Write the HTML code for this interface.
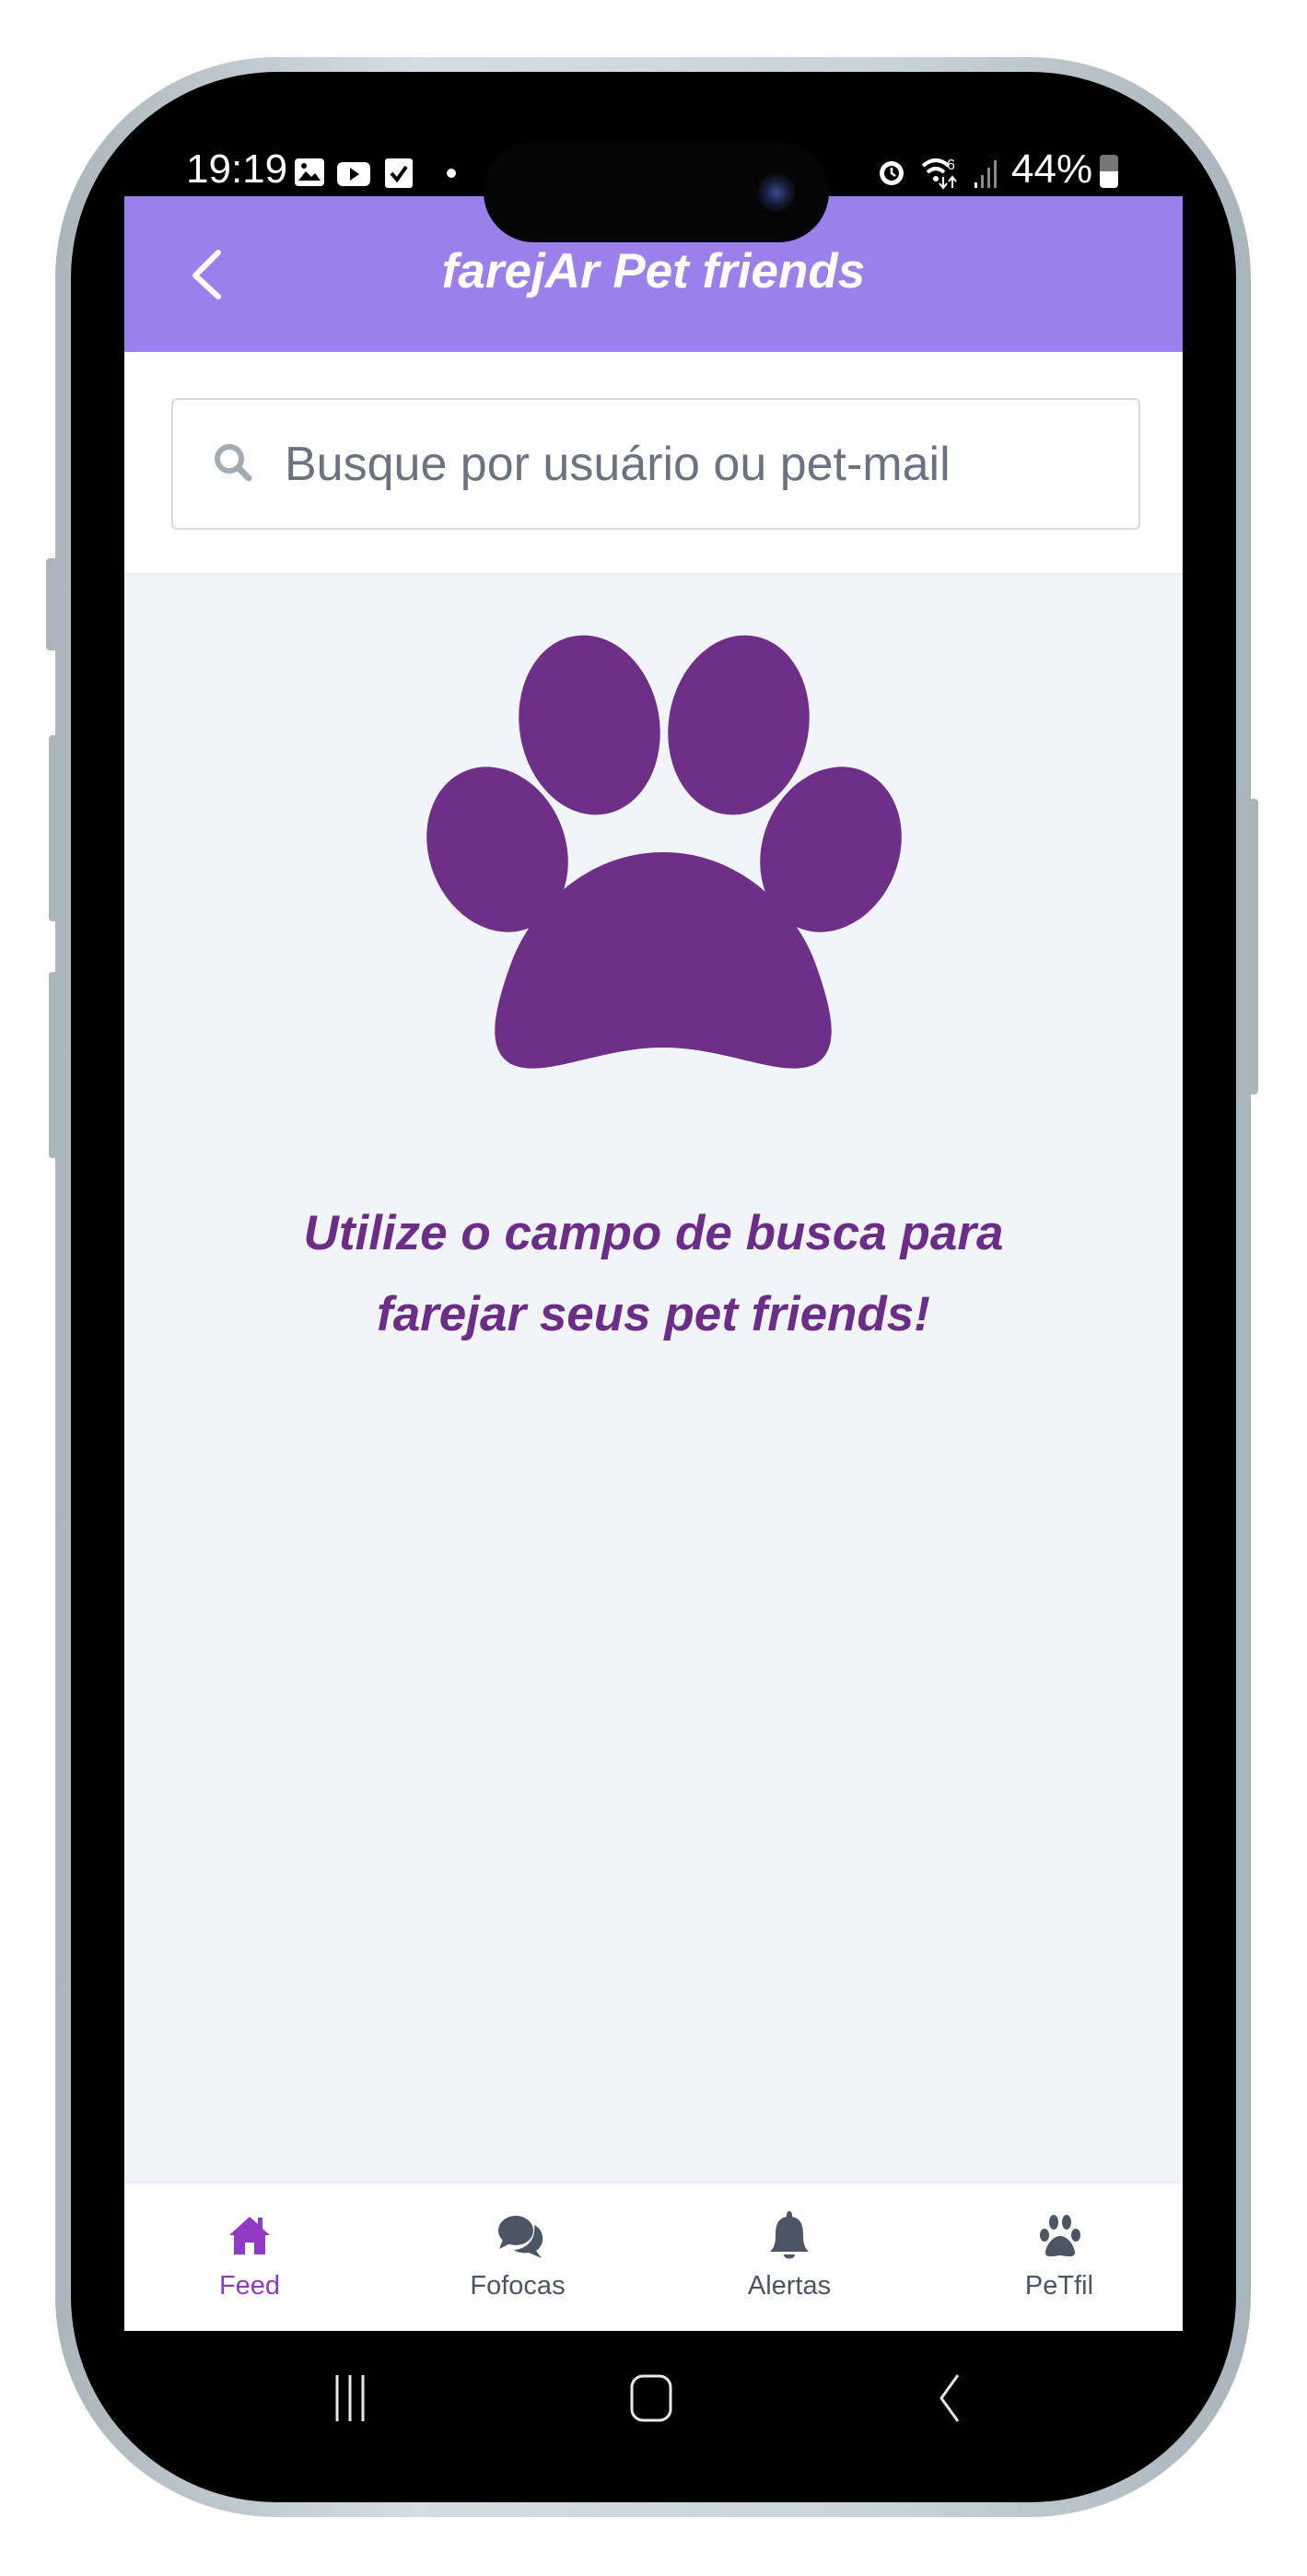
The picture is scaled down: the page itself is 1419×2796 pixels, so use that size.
<!DOCTYPE html>
<html><head><meta charset="utf-8">
<style>
*{margin:0;padding:0;box-sizing:border-box}
html,body{width:1419px;height:2796px;background:#fff;overflow:hidden;font-family:"Liberation Sans",Arial,sans-serif}
.a{position:absolute}
</style></head><body>
<!-- side buttons -->
<div class="a" style="left:50px;top:606px;width:14px;height:100px;background:#a9b4bb;border-radius:4px"></div>
<div class="a" style="left:53px;top:798px;width:11px;height:202px;background:#a9b4bb;border-radius:4px"></div>
<div class="a" style="left:53px;top:1055px;width:11px;height:202px;background:#a9b4bb;border-radius:4px"></div>
<div class="a" style="left:1354px;top:867px;width:12px;height:321px;background:#a9b4bb;border-radius:4px"></div>
<!-- frame -->
<div class="a" style="left:60px;top:62px;width:1298px;height:2670px;border-radius:240px;background:linear-gradient(90deg,#aab6bd,#d3dde2 30%,#c8d3d9 70%,#a9b5bc)"></div>
<div class="a" style="left:77px;top:78px;width:1265px;height:2638px;border-radius:224px;background:#000"></div>
<!-- screen -->
<div class="a" style="left:135px;top:213px;width:1149px;height:2317px;background:#f1f4f8;overflow:hidden">
  <div class="a" style="left:0;top:0;width:1149px;height:169px;background:#9b80ec"></div>
  <svg class="a" style="left:0;top:0" width="200" height="169"><path d="M102 61 L77 86 L102 109" fill="none" stroke="#fff" stroke-width="6" stroke-linecap="round" stroke-linejoin="round"/></svg>
  <div class="a" style="left:0;top:52px;width:1149px;text-align:center;color:#fff;font-weight:bold;font-style:italic;font-size:53px;line-height:60px">farejAr Pet friends</div>
  <div class="a" style="left:0;top:169px;width:1149px;height:242px;background:#fff;border-bottom:2px solid #e8ebef"></div>
  <div class="a" style="left:51px;top:219px;width:1052px;height:143px;border:2px solid #d6d9de;border-radius:6px;background:#fff"></div>
  <svg class="a" style="left:96px;top:267px" width="46" height="46" viewBox="0 0 46 46"><circle cx="18" cy="18" r="13" fill="none" stroke="#a3abb3" stroke-width="6"/><path d="M28 28 L39 39" stroke="#a3abb3" stroke-width="7" stroke-linecap="round"/></svg>
  <div class="a" style="left:174px;top:262px;color:#6b7280;font-size:52px;line-height:58px">Busque por usuário ou pet-mail</div>
  <!-- paw -->
  <svg class="a" style="left:-135px;top:-213px" width="1419" height="1400">
    <g fill="#6e2f89">
      <ellipse cx="640" cy="787" rx="76" ry="98" transform="rotate(-10 640 787)"/>
      <ellipse cx="802" cy="787" rx="76" ry="98" transform="rotate(10 802 787)"/>
      <ellipse cx="540" cy="922" rx="74" ry="92" transform="rotate(-22 540 922)"/>
      <ellipse cx="902" cy="922" rx="74" ry="92" transform="rotate(22 902 922)"/>
      <path d="M720 925 C805 925 865 990 885 1045 C905 1100 912 1140 885 1155 C850 1172 790 1137 720 1137 C650 1137 590 1172 555 1155 C528 1140 535 1100 555 1045 C575 990 635 925 720 925 Z"/>
    </g>
  </svg>
  <div class="a" style="left:0;top:1082px;width:1149px;text-align:center;color:#6b2d87;font-weight:bold;font-style:italic;font-size:53px;line-height:88px">Utilize o campo de busca para<br>farejar seus pet friends!</div>
  <!-- bottom nav -->
  <div class="a" style="left:0;top:2155px;width:1149px;height:162px;background:#fff;border-top:2px solid #eceef1"></div>
  <svg class="a" style="left:112px;top:2190px" width="48" height="46" viewBox="0 0 48 46"><path d="M24 3 L2 23 L7 23 L7 44 L19 44 L19 31 L29 31 L29 44 L41 44 L41 23 L46 23 L38 16 L38 4 L33 4 L33 11 Z" fill="#9039c2"/></svg>
  <svg class="a" style="left:403px;top:2190px" width="56" height="50" viewBox="0 0 56 50"><ellipse cx="22" cy="18" rx="19" ry="16" fill="#4b5563"/><path d="M8 28 L4 38 L16 32Z" fill="#4b5563"/><path d="M42 12 C54 18 54 34 44 40 L50 48 L36 42 C30 43 24 42 20 39 C34 38 44 28 42 12Z" fill="#4b5563"/></svg>
  <svg class="a" style="left:697px;top:2185px" width="50" height="56" viewBox="0 0 50 56"><path d="M25 2 C22 2 22 6 22 8 C12 10 10 18 10 28 C10 38 8 42 4 46 L46 46 C42 42 40 38 40 28 C40 18 38 10 28 8 C28 6 28 2 25 2Z M19 49 C19 55 31 55 31 49Z" fill="#4b5563"/></svg>
  <svg class="a" style="left:992px;top:2190px" width="48" height="48" viewBox="0 0 48 48"><g fill="#4b5563"><ellipse cx="17" cy="9" rx="5" ry="8"/><ellipse cx="31" cy="9" rx="5" ry="8"/><ellipse cx="7" cy="23" rx="5" ry="7"/><ellipse cx="41" cy="23" rx="5" ry="7"/><path d="M24 24 C33 24 40 36 40 42 C40 48 32 46 24 45 C16 46 8 48 8 42 C8 36 15 24 24 24Z"/></g></svg>
  <div class="a" style="left:86px;top:2252px;width:100px;text-align:center;color:#9039c2;font-size:29px">Feed</div>
  <div class="a" style="left:357px;top:2252px;width:140px;text-align:center;color:#4b5563;font-size:29px">Fofocas</div>
  <div class="a" style="left:652px;top:2252px;width:140px;text-align:center;color:#4b5563;font-size:29px">Alertas</div>
  <div class="a" style="left:945px;top:2252px;width:140px;text-align:center;color:#4b5563;font-size:29px">PeTfil</div>
</div>
<!-- status bar -->
<div class="a" style="left:202px;top:160px;color:#fff;font-size:44px;line-height:48px">19:19</div>
<svg class="a" style="left:318px;top:170px" width="200" height="36"><rect x="2" y="2" width="32" height="30" rx="4" fill="#fff"/><path d="M6 26 L14 16 L20 22 L24 18 L30 26Z" fill="#000"/><circle cx="12" cy="10" r="3" fill="#000"/><rect x="48" y="6" width="36" height="26" rx="6" fill="#fff"/><path d="M62 12 L72 19 L62 26Z" fill="#000"/><rect x="100" y="2" width="30" height="32" rx="3" fill="#fff"/><path d="M107 18 L113 25 L123 11" stroke="#000" stroke-width="4" fill="none"/><circle cx="172" cy="18" r="5" fill="#fff"/></svg>
<!-- island -->
<div class="a" style="left:525px;top:154px;width:375px;height:109px;border-radius:55px;background:#050505"></div>
<div class="a" style="left:822px;top:188px;width:42px;height:42px;border-radius:50%;background:radial-gradient(circle,#3a4a8a 0,#151a35 45%,#0a0a12 70%)"></div>
<svg class="a" style="left:950px;top:166px" width="150" height="42"><circle cx="18" cy="22" r="13" fill="#fff"/><circle cx="18" cy="22" r="8" fill="#000"/><path d="M18 16 L18 22 L22 25" stroke="#fff" stroke-width="2.5" fill="none"/><path d="M52 14 Q66 2 80 14" stroke="#fff" stroke-width="4" fill="none"/><path d="M57 21 Q66 13 75 21" stroke="#fff" stroke-width="4" fill="none"/><circle cx="66" cy="28" r="3" fill="#fff"/><text x="78" y="18" fill="#fff" font-size="16" font-family="Liberation Sans">6</text><path d="M74 26 v12 M70 33 l4 5 l4-5 M84 38 v-12 M80 31 l4-5 l4 5" stroke="#fff" stroke-width="2" fill="none"/><rect x="108" y="32" width="3" height="6" fill="#fff"/><rect x="115" y="24" width="3" height="14" fill="#888"/><rect x="122" y="16" width="3" height="22" fill="#888"/><rect x="129" y="8" width="3" height="30" fill="#888"/></svg>
<div class="a" style="left:1098px;top:160px;color:#fff;font-size:44px;line-height:48px">44%</div>
<div class="a" style="left:1194px;top:168px;width:20px;height:36px;border-radius:4px;background:linear-gradient(#777 50%,#fff 50%)"></div>
<!-- android nav -->
<svg class="a" style="left:360px;top:2576px" width="700" height="56"><g stroke="#e8e8e8" stroke-width="3" fill="none"><path d="M6 2v50 M20 2v50 M34 2v50"/><rect x="326" y="3" width="42" height="48" rx="12"/><path d="M680 2 L662 27 L680 52" stroke-linejoin="round"/></g></svg>
</body></html>
